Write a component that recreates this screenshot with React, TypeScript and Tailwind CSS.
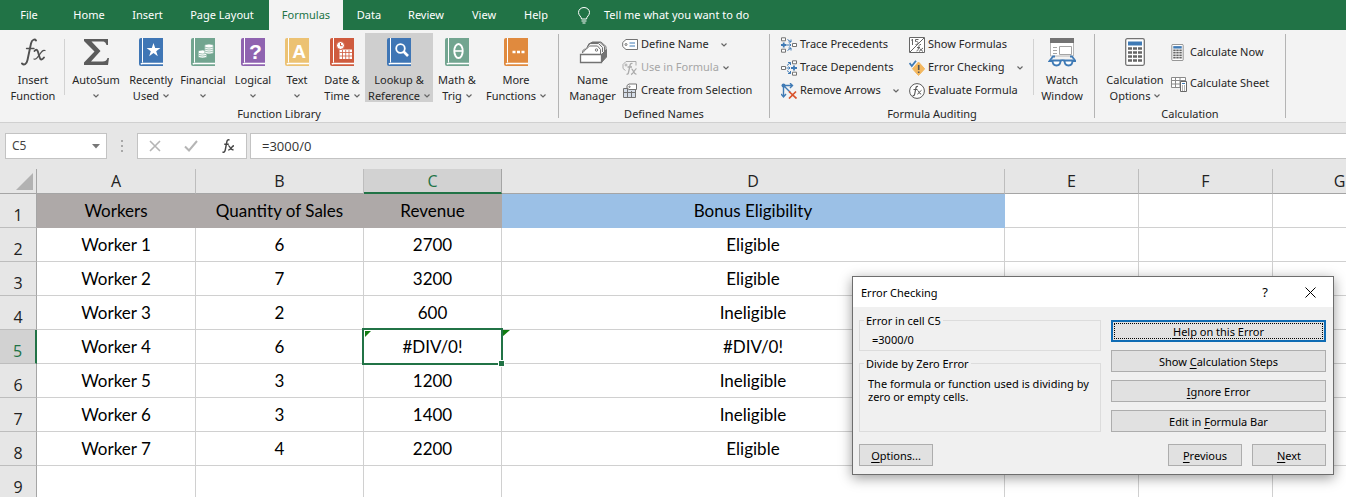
import { useState } from "react";

const TABS = [
  { label: "File", width: "w-[58px]" },
  { label: "Home", width: "w-[62px]" },
  { label: "Insert", width: "w-[55px]" },
  { label: "Page Layout", width: "w-[94px]" },
  { label: "Formulas", width: "w-[74px]" },
  { label: "Data", width: "w-[52px]" },
  { label: "Review", width: "w-[62px]" },
  { label: "View", width: "w-[54px]" },
  { label: "Help", width: "w-[50px]" },
];

const COLUMNS = ["A", "B", "C", "D", "E", "F", "G"];

const ROWS = [
  ["Workers", "Quantity of Sales", "Revenue", "Bonus Eligibility"],
  ["Worker 1", "6", "2700", "Eligible"],
  ["Worker 2", "7", "3200", "Eligible"],
  ["Worker 3", "2", "600", "Ineligible"],
  ["Worker 4", "6", "#DIV/0!", "#DIV/0!"],
  ["Worker 5", "3", "1200", "Ineligible"],
  ["Worker 6", "3", "1400", "Ineligible"],
  ["Worker 7", "4", "2200", "Eligible"],
  ["", "", "", ""],
];

function Chevron({ className = "" }: { className?: string }) {
  return (
    <svg className={`inline-block ${className}`} width="6" height="4" viewBox="0 0 6 4" fill="none" stroke="#666" strokeWidth="1.2">
      <path d="M.5.5 3 3 5.5.5" />
    </svg>
  );
}

function Book({ color, children }: { color: string; children: React.ReactNode }) {
  return (
    <svg width="24" height="28" viewBox="0 0 24 28" fill="none">
      <path d="M2 0h22v28H2a2 2 0 0 1-2-2V2a2 2 0 0 1 2-2z" fill={color} />
      <path d="M3.5 0v24.5" stroke="#fff" />
      <path d="M24 25.5H3.5a2 2 0 0 0-1.5.8" stroke="#fff" strokeWidth="1.6" />
      {children}
    </svg>
  );
}

function FxIcon() {
  return (
    <svg width="26" height="28" viewBox="0 0 26 28" fill="none" stroke="#505050" strokeLinecap="round">
      <path d="M16 2.5c-1-1.700-4-1.300-5 3L7.500 22c-.9 4.500-3.500 5.500-5.500 3.500" strokeWidth="1.9" />
      <path d="M6.500 10.500h7.500" strokeWidth="1.3" />
      <path d="M14.500 13c2-2.500 3.200-.8 4 2.500l1 3.500c.8 3.200 2.500 3.200 4.500.5" strokeWidth="1.9" />
      <path d="M25 12.500c-2-1-3.300.8-5.500 4.200-2 3.200-3.500 5.500-5.500 4.300" strokeWidth="1.2" />
    </svg>
  );
}

function SigmaIcon() {
  return (
    <svg width="26" height="28" viewBox="0 0 26 28" fill="#5c5c5c">
      <path d="M1 1h24v6h-1.500C22.500 4 21.500 3.500 18.500 3.500H8.500L17.500 13 8 23.500h11.500c3 0 4-.8 5-3.500H26l-1 7H1v-2.500L11.500 13.500 1 3z" />
    </svg>
  );
}

function NameManagerIcon() {
  return (
    <svg width="28" height="28" viewBox="0 0 28 28" fill="none" stroke="#737373">
      <path d="M3.500 15c0-3 1-4 4-4l3-3h8l3 3.500V16" fill="#fff" />
      <path d="M7.500 10.500 10 5.500h9.500l4 4V14M9 8l3-3.500h9l4.500 4V13M11 5.500 13.500 4H22l5 4.500v4" />
      <path d="m22.500 16.500 5-5v7.500l-5 5.500z" fill="#737373" />
      <path d="M1.500 16.500h21v8h-21z" fill="#fff" strokeWidth="1.3" />
      <circle cx="17.500" cy="12" r="1.2" />
      <path d="M4 14.500 7 11" />
    </svg>
  );
}

function WatchWindowIcon() {
  return (
    <svg width="28" height="30" viewBox="0 0 28 30" fill="none">
      <path d="M2.500 2.500h23V18h-23z" fill="#fff" stroke="#b5b5b5" />
      <path d="M2 0h24v5H2z" fill="#737373" />
      <path d="M11.500 8.500h12v8h-12zM5 9.500h4M5 12.500h4M5 15.500h4" stroke="#a5a5a5" />
      <g stroke="#3f7ab5" strokeWidth="1.8">
        <path d="M4.500 22.500h8c0 3-1.200 5-4 5s-4-2-4-5zM16.500 22.500h8c0 3-1.200 5-4 5s-4-2-4-5z" fill="#fff" />
        <path d="M12.500 23c1-1 3-1 4 0M4 23H1.500L5 18.500h2M25 23h2.500L24 18.500h-2" />
      </g>
    </svg>
  );
}

function CalculatorIcon({ width, height }: { width: number; height: number }) {
  return (
    <svg width={width} height={height} viewBox="0 0 20 28" fill="none">
      <rect x=".7" y=".7" width="18.6" height="26.6" rx="1.5" fill="#fff" stroke="#737373" strokeWidth="1.3" />
      <path d="M3 3.500h14v4H3z" fill="#3f7ab5" />
      <path d="M3 10.500h14M3 14.500h14M3 18.500h14M3 22.500h14" stroke="#666" strokeWidth="2.6" strokeDasharray="4 1" />
    </svg>
  );
}

function TagIcon() {
  return (
    <svg width="16" height="14" viewBox="0 0 16 14" fill="none" stroke="#737373">
      <path d="M4 1.500h11.500v10H4L.7 8.500v-4z" fill="#fff" strokeLinejoin="round" />
      <circle cx="4" cy="6.500" r="1" />
      <path d="M7.500 5h5.500M7.500 8h5.500" stroke="#3f7ab5" />
    </svg>
  );
}

function UseFormulaIcon() {
  return (
    <svg width="16" height="16" viewBox="0 0 16 16" fill="none" stroke="#ababab">
      <path d="M3.500 10.500 1 8.500V4.500l3-3h10v4" />
      <circle cx="4" cy="5" r="1" />
      <path d="M10.500 3.500c-1.500-.5-2.200.5-2.500 2l-1.500 7c-.3 1.500-1 2-2 1.500M5.500 7h4.500M9.500 9c2 0 2 6 5 5M14.500 8.500c-2 1-3 5.500-5.500 6" strokeWidth="1.3" />
    </svg>
  );
}

function CreateSelectionIcon() {
  return (
    <svg width="16" height="16" viewBox="0 0 16 16" fill="none" stroke="#737373">
      <path d="M1.500 5.500h12v9h-12z" fill="#d5dde8" />
      <path d="M1.500 9.500h12M5.500 5.500v9M9.500 8v6.500" />
      <path d="M7 1h7.500v5.500H7L5 5V2.500z" fill="#fff" />
      <circle cx="7.500" cy="3.800" r=".7" />
    </svg>
  );
}

function PrecedentsIcon() {
  return (
    <svg width="16" height="16" viewBox="0 0 16 16" fill="none" stroke="#737373">
      <path d="M.5.8h4v3h-4zM.5 12.200h4v3h-4zM11.500 6.500h4v3h-4z" fill="#fff" />
      <path d="M0 8h5.500M2.700 5.500v5" stroke="#3f7ab5" strokeWidth="1.8" />
      <path d="M6.500 2.500 10 5M10 2.500V5H7.500M6.500 13.500 10 11M10 13.500V11H7.500M6 8h4M8.500 6.500 10 8 8.500 9.500" stroke="#3f7ab5" />
    </svg>
  );
}

function DependentsIcon() {
  return (
    <svg width="16" height="16" viewBox="0 0 16 16" fill="none" stroke="#737373">
      <path d="M.5 6.500h4v3h-4zM11.500.8h4v3h-4zM11.500 12.200h4v3h-4z" fill="#fff" />
      <path d="M10 8h6M13 5.500v5" stroke="#3f7ab5" strokeWidth="1.8" />
      <path d="m6 5.500 3.500-3M7 2.500h2.500V5M6 10.500l3.500 3M7 13.500h2.500V11M5.500 8H9M7.500 6.500 9 8 7.500 9.500" stroke="#3f7ab5" />
    </svg>
  );
}

function RemoveArrowsIcon() {
  return (
    <svg width="16" height="16" viewBox="0 0 16 16" fill="none">
      <path d="M2.500 2v11M0 11l2.500 3L5 11M2 2.500h9M9 .2l2.500 2.300L9 5M2.500 2.500l7 7" stroke="#3f7ab5" strokeWidth="1.4" />
      <circle cx="2.500" cy="2.500" r="2" fill="#3f7ab5" />
      <path d="m8 8.500 7.500 7M15 8.500 8 15.500" stroke="#d9532c" strokeWidth="1.7" />
    </svg>
  );
}

function ShowFormulasIcon() {
  return (
    <svg width="16" height="16" viewBox="0 0 16 16" fill="none" stroke="#666">
      <path d="M.5.5h15v15H.5z" fill="#fff" />
      <path d="M15 1 1 15" />
      <path d="M3.500 2v6M2.500 3.500 3.500 2M9.500 2.500h-3v2c3.500-.5 3.500 3 0 3" />
      <path d="M12 7.500c-2-.5-2 1.500-2.500 3.500s-.5 3-2 3M8 10.500h3M10.500 11.500l3.500 3M14 11l-4 3.500" />
    </svg>
  );
}

function ErrorCheckingIcon() {
  return (
    <svg width="16" height="16" viewBox="0 0 16 16" fill="none">
      <path d="m9.500 2 6.200 6.800-6.200 6.700L3.500 8.800z" fill="#f3b75e" stroke="#f3b75e" strokeLinejoin="round" />
      <path d="M9.700 5v5M9.700 11.500v1.600" stroke="#555" strokeWidth="1.6" />
      <path d="m.5 3 2.300 3L7 .8" stroke="#3f7ab5" strokeWidth="1.8" />
    </svg>
  );
}

function EvaluateIcon() {
  return (
    <svg width="16" height="16" viewBox="0 0 16 16" fill="none" stroke="#595959">
      <circle cx="8" cy="8" r="7.4" fill="#fff" />
      <path d="M9 3.500c-1.500-.5-1.900.5-2.200 2L5.700 11c-.3 1.500-1 1.800-2 1.300M4.500 6.500h4" strokeWidth="1.2" />
      <path d="M8.500 7.500c1.500-.2 1.500 4 3.700 3.500M12.500 7.300c-1.700.5-2.200 3.400-4.200 3.900" />
    </svg>
  );
}

function CalcSheetIcon() {
  return (
    <svg width="16" height="16" viewBox="0 0 16 16" fill="none" stroke="#8a8a8a">
      <path d="M.5 1.500h14v10H.5zM.5 4.500h14M.5 8h14M4.500 1.500v10M9 1.500v10" fill="#fff" />
      <path d="M9.500 5.500h6v10h-6z" fill="#fff" stroke="#666" />
      <path d="M11 7.500h3" stroke="#3f7ab5" />
      <path d="M11 10h3M11 12h3M11 14h3" strokeDasharray="1 1" stroke="#666" />
    </svg>
  );
}

interface BigButtonProps {
  icon: React.ReactNode;
  lines: [string, string?];
  width: string;
  menu?: boolean;
  active?: boolean;
}

function BigButton({ icon, lines, width, menu, active }: BigButtonProps) {
  return (
    <button className={`flex h-[69px] shrink-0 flex-col items-center whitespace-nowrap pt-[5px] ${width} ${active ? "bg-[#cfcfcf]" : ""}`}>
      <span className="flex h-7 items-start justify-center">{icon}</span>
      <span className="mt-1.5 block leading-4">
        {lines[0]}
        <br />
        {lines[1]}
        {menu && <Chevron className={lines[1] ? "mb-0.5 ml-1" : "mb-0.5"} />}
      </span>
    </button>
  );
}

interface SmallButtonProps {
  icon: React.ReactNode;
  label: string;
  menu?: boolean;
  disabled?: boolean;
  tall?: boolean;
}

function SmallButton({ icon, label, menu, disabled, tall }: SmallButtonProps) {
  return (
    <button disabled={disabled} className={`flex items-center whitespace-nowrap ${tall ? "h-[31px]" : "h-[23px]"} ${disabled ? "text-[#a6a6a6]" : ""}`}>
      <span className="flex w-[19px] shrink-0 items-center">{icon}</span>
      {label}
      {menu && <Chevron className={disabled ? "ml-1" : "ml-3"} />}
    </button>
  );
}

function Group({ label, width, children }: { label: string; width: string; children: React.ReactNode }) {
  return (
    <section className={`flex shrink-0 flex-col pt-[3px] ${width}`}>
      <div className="flex h-[70px]">{children}</div>
      <h2 className="mt-[3px] text-center leading-4">{label}</h2>
    </section>
  );
}

function Divider({ short }: { short?: boolean }) {
  return <div className={`w-px shrink-0 ${short ? "mt-1.5 h-14 bg-[#d2d2d2]" : "mt-1 h-[84px] bg-[#b4b4b4]"}`} />;
}

function Ribbon() {
  return (
    <div className="flex h-[92px] shrink-0 overflow-hidden bg-[#f3f3f3]">
      <Group label="Function Library" width="w-[558px]">
        <BigButton icon={<FxIcon />} lines={["Insert", "Function"]} width="ml-0.5 w-[62px]" />
        <Divider short />
        <BigButton icon={<SigmaIcon />} lines={["AutoSum"]} width="w-[62px]" menu />
        <BigButton
          icon={
            <Book color="#3f76b5">
              <path d="m14.500 5 1.700 5h5.200l-4.200 3.200 1.600 5-4.300-3.100-4.300 3.100 1.600-5L7.600 10h5.200z" fill="#fff" />
            </Book>
          }
          lines={["Recently", "Used"]}
          width="w-12"
          menu
        />
        <BigButton
          icon={
            <Book color="#72a590">
              <g fill="#fff" stroke="#72a590" strokeWidth=".7">
                <ellipse cx="11.500" cy="18" rx="4.500" ry="2" />
                <ellipse cx="11.500" cy="16" rx="4.500" ry="2" />
                <ellipse cx="11.500" cy="14" rx="4.500" ry="2" />
                <ellipse cx="18" cy="14" rx="4.500" ry="2" />
                <ellipse cx="18" cy="12" rx="4.500" ry="2" />
                <ellipse cx="18" cy="10" rx="4.500" ry="2" />
                <ellipse cx="18" cy="8" rx="4.500" ry="2" />
              </g>
            </Book>
          }
          lines={["Financial"]}
          width="w-14"
          menu
        />
        <BigButton
          icon={
            <Book color="#8f63b0">
              <text x="14.500" y="20.500" textAnchor="middle" fill="#fff" className="font-['Liberation_Sans',sans-serif] text-[21px] font-bold">
                ?
              </text>
            </Book>
          }
          lines={["Logical"]}
          width="w-11"
          menu
        />
        <BigButton
          icon={
            <Book color="#ecc273">
              <text x="14" y="20" textAnchor="middle" fill="#fff" className="font-['Liberation_Sans',sans-serif] text-[19px] font-bold">
                A
              </text>
            </Book>
          }
          lines={["Text"]}
          width="w-11"
          menu
        />
        <BigButton
          icon={
            <Book color="#cf5b3e">
              <path d="M9.500 11.500h12.500V21H9.500z" fill="#fff" />
              <path d="M9.500 14.500H22M9.500 18H22M12.500 12v9M15.700 12v9M19 12v9" stroke="#cf5b3e" strokeWidth=".8" />
              <circle cx="10.500" cy="7.500" r="4" fill="#fff" stroke="#cf5b3e" />
              <path d="M10.500 5v2.700h2" stroke="#cf5b3e" />
            </Book>
          }
          lines={["Date &", "Time"]}
          width="w-[46px]"
          menu
        />
        <BigButton
          icon={
            <Book color="#3f76b5">
              <circle cx="13.500" cy="10.500" r="4.3" stroke="#fff" strokeWidth="1.8" />
              <path d="m16.500 13.500 4.500 4.500" stroke="#fff" strokeWidth="2.6" />
            </Book>
          }
          lines={["Lookup &", "Reference"]}
          width="w-[68px]"
          menu
          active
        />
        <BigButton
          icon={
            <Book color="#72a590">
              <ellipse cx="13.500" cy="13" rx="4.2" ry="7" stroke="#fff" strokeWidth="1.9" />
              <path d="M9.500 13h8" stroke="#fff" strokeWidth="1.6" />
            </Book>
          }
          lines={["Math &", "Trig"]}
          width="w-12"
          menu
        />
        <BigButton
          icon={
            <Book color="#e08a3e">
              <path d="M8.500 14h3M13 14h3M17.500 14h3" stroke="#fff" strokeWidth="2.6" />
            </Book>
          }
          lines={["More", "Functions"]}
          width="w-[70px]"
          menu
        />
      </Group>
      <Divider />
      <Group label="Defined Names" width="w-[210px]">
        <BigButton icon={<NameManagerIcon />} lines={["Name", "Manager"]} width="ml-1 w-[59px]" />
        <div>
          <SmallButton icon={<TagIcon />} label="Define Name" menu />
          <SmallButton icon={<UseFormulaIcon />} label="Use in Formula" menu disabled />
          <SmallButton icon={<CreateSelectionIcon />} label="Create from Selection" />
        </div>
      </Group>
      <Divider />
      <Group label="Formula Auditing" width="w-[324px]">
        <div className="w-[139px] shrink-0 pl-[11px]">
          <SmallButton icon={<PrecedentsIcon />} label="Trace Precedents" />
          <SmallButton icon={<DependentsIcon />} label="Trace Dependents" />
          <SmallButton icon={<RemoveArrowsIcon />} label="Remove Arrows" menu />
        </div>
        <div className="w-[124px] shrink-0">
          <SmallButton icon={<ShowFormulasIcon />} label="Show Formulas" />
          <SmallButton icon={<ErrorCheckingIcon />} label="Error Checking" menu />
          <SmallButton icon={<EvaluateIcon />} label="Evaluate Formula" />
        </div>
        <Divider short />
        <BigButton icon={<WatchWindowIcon />} lines={["Watch", "Window"]} width="w-[56px]" />
      </Group>
      <Divider />
      <Group label="Calculation" width="w-[190px]">
        <BigButton icon={<CalculatorIcon width={20} height={28} />} lines={["Calculation", "Options"]} width="ml-1 w-[72px]" menu />
        <div className="pt-1">
          <SmallButton icon={<CalculatorIcon width={13} height={17} />} label="Calculate Now" tall />
          <SmallButton icon={<CalcSheetIcon />} label="Calculate Sheet" tall />
        </div>
      </Group>
      <Divider />
    </div>
  );
}

function FormulaBar() {
  return (
    <div className="flex h-[47px] shrink-0 items-start border-t border-[#d0d0d0] pl-[5px] pt-2.5">
      <div className="flex h-[26px] w-[102px] items-center border border-[#c3c3c3] bg-white">
        <input aria-label="Name Box" defaultValue="C5" className="w-full min-w-0 pl-1.5 text-xs text-[#444] outline-none" />
        <button aria-label="Open name list" className="px-1.5">
          <svg width="8" height="5" viewBox="0 0 8 5" fill="#777">
            <path d="M0 0h8L4 4.500z" />
          </svg>
        </button>
      </div>
      <svg className="mx-[13px] mt-1.5" width="4" height="14" viewBox="0 0 4 14" fill="#a8a8a8">
        <path d="M1 1h2v2H1zM1 6h2v2H1zM1 11h2v2H1z" />
      </svg>
      <div className="flex h-[26px] w-[110px] items-center justify-around border border-[#c3c3c3] bg-white">
        <button aria-label="Cancel">
          <svg width="12" height="12" viewBox="0 0 12 12" fill="none" stroke="#b5b5b5" strokeWidth="1.6">
            <path d="m1 1 10 10M11 1 1 11" />
          </svg>
        </button>
        <button aria-label="Enter">
          <svg width="14" height="12" viewBox="0 0 14 12" fill="none" stroke="#b5b5b5" strokeWidth="2">
            <path d="m1 6.500 4 4L13 1" />
          </svg>
        </button>
        <button aria-label="Insert Function">
          <svg width="14" height="14" viewBox="0 0 26 28" fill="none" stroke="#444" strokeWidth="2.8">
            <path d="M16 2.500c-2-1.700-4.500-1-5.300 3L7.500 22c-.9 4.500-3.500 5.500-5.500 3.500M5.500 10.500h9" />
            <path d="M13.500 14c4-2 3.500 10 10.500 7M25 13.500c-5 0-6 9-11.500 8.500" />
          </svg>
        </button>
      </div>
      <input
        aria-label="Formula Bar"
        defaultValue="=3000/0"
        className="ml-[3px] h-[26px] min-w-0 flex-1 border border-r-0 border-[#c3c3c3] bg-white pl-[11px] font-['Open_Sans',sans-serif] text-[13px] leading-4 text-[#333] outline-none"
      />
    </div>
  );
}

function cellClass(row: number, col: number) {
  if (row > 0) return "border-[#d0d0d0] bg-white";
  if (col < 3) return "border-[#aea9a8] bg-[#aea9a8]";
  if (col === 3) return "border-[#9bc0e6] bg-[#9bc0e6]";
  return "border-[#d0d0d0] bg-white";
}

function Sheet() {
  return (
    <div className="min-h-0 flex-1 overflow-hidden">
      <table className="w-[1407px] table-fixed border-separate border-spacing-0 text-center">
        <colgroup>
          <col className="w-[37px]" />
          <col className="w-[159px]" />
          <col className="w-[168px]" />
          <col className="w-[138px]" />
          <col className="w-[503px]" />
          <col className="w-[134px]" />
          <col className="w-[134px]" />
          <col className="w-[134px]" />
        </colgroup>
        <thead>
          <tr className="h-[25px] font-['Open_Sans',sans-serif] text-base leading-5 text-[#222]">
            <th className="border-b border-r border-[#a5a5a5] p-0">
              <svg className="ml-auto mr-[3px]" width="17" height="17" viewBox="0 0 17 17" fill="#b2b2b2">
                <path d="M17 0v17H0z" />
              </svg>
            </th>
            {COLUMNS.map((col) => (
              <th
                key={col}
                className={`p-0 font-normal ${col === "C" ? "border-b-2 border-r border-b-[#217346] border-r-[#a5a5a5] bg-[#d2d2d2] text-[#217346]" : "border-b border-r border-b-[#a5a5a5] border-r-[#bdbdbd]"}`}
              >
                {col}
              </th>
            ))}
          </tr>
        </thead>
        <tbody>
          {ROWS.map((row, r) => (
            <tr key={r} className="h-[34px] font-[Lato,sans-serif] text-[17px] leading-6 text-black">
              <th
                className={`border-b border-b-[#bdbdbd] p-0 pt-2 font-['Open_Sans',sans-serif] text-base font-normal leading-5 ${r === 4 ? "border-r-2 border-r-[#217346] bg-[#d2d2d2] text-[#217346]" : "border-r border-r-[#a5a5a5] text-[#222]"}`}
              >
                {r + 1}
              </th>
              {COLUMNS.map((col, c) => (
                <td key={col} className={`relative border-b border-r p-0 ${cellClass(r, c)} ${r === 4 && c === 2 ? "z-10" : ""}`}>
                  {row[c]}
                  {r === 4 && c === 2 && (
                    <span className="pointer-events-none absolute -inset-0.5 border-2 border-[#217346]">
                      <span className="absolute -bottom-1 -right-1 size-[7px] border border-white bg-[#217346]" />
                    </span>
                  )}
                  {r === 4 && (c === 2 || c === 3) && (
                    <svg className="absolute left-0 top-0" width="8" height="7" viewBox="0 0 8 7" fill="#107c10">
                      <path d={c === 2 ? "M1 1h6L1 7z" : "M0 0h8L0 7z"} />
                    </svg>
                  )}
                </td>
              ))}
            </tr>
          ))}
        </tbody>
      </table>
    </div>
  );
}

interface DialogButtonProps {
  before?: string;
  hotkey: string;
  after: string;
  focused?: boolean;
  small?: boolean;
}

function DialogButton({ before = "", hotkey, after, focused, small }: DialogButtonProps) {
  return (
    <button
      className={`h-[22px] bg-[#e1e1e1] ${small ? "w-[74px]" : "w-full"} ${focused ? "border-2 border-[#0f6cb4] p-px" : "border border-[#adadad]"}`}
    >
      <span className={`flex h-full items-center justify-center whitespace-pre ${focused ? "border border-dotted border-black" : ""}`}>
        {before}
        <u className="underline-offset-2">{hotkey}</u>
        {after}
      </span>
    </button>
  );
}

function ErrorDialog({ onClose }: { onClose: () => void }) {
  return (
    <div
      role="dialog"
      aria-label="Error Checking"
      className="absolute bottom-[22px] right-3 z-20 w-[482px] border border-[#6e6e6e] bg-[#f0f0f0] leading-[13px] text-black shadow-[0_3px_12px_rgba(0,0,0,0.4)]"
    >
      <div className="flex h-[30px] items-center bg-white pl-2">
        <h2 className="flex-1">Error Checking</h2>
        <button aria-label="Help" className="w-11 text-[13px]">?</button>
        <button aria-label="Close" onClick={onClose} className="flex w-[46px] justify-center">
          <svg width="11" height="11" viewBox="0 0 11 11" fill="none" stroke="#000">
            <path d="m.5.5 10 10M10.500.5l-10 10" />
          </svg>
        </button>
      </div>
      <div className="flex gap-2.5 pl-1.5 pr-[7px] pt-[7px]">
        <div className="w-[242px]">
          <fieldset className="h-[37px] border border-[#dcdcdc] pl-3">
            <legend className="-ml-2 px-0.5">Error in cell C5</legend>
            <p className="pt-1.5">=3000/0</p>
          </fieldset>
          <fieldset className="mt-1.5 h-[75px] border border-[#dcdcdc] pl-2">
            <legend className="-ml-1 px-0.5">Divide by Zero Error</legend>
            <p className="pt-[7px]">
              The formula or function used is dividing by
              <br />
              zero or empty cells.
            </p>
          </fieldset>
        </div>
        <div className="flex flex-1 flex-col gap-2 pt-1.5">
          <DialogButton hotkey="H" after="elp on this Error" focused />
          <DialogButton before="Show " hotkey="C" after="alculation Steps" />
          <DialogButton hotkey="I" after="gnore Error" />
          <DialogButton before="Edit in " hotkey="F" after="ormula Bar" />
        </div>
      </div>
      <div className="flex gap-2.5 pb-2 pl-1.5 pr-[7px] pt-3">
        <DialogButton hotkey="O" after="ptions..." small />
        <span className="flex-1" />
        <DialogButton hotkey="P" after="revious" small />
        <DialogButton hotkey="N" after="ext" small />
      </div>
    </div>
  );
}

export default function App() {
  const [tab, setTab] = useState("Formulas");
  const [dialogOpen, setDialogOpen] = useState(true);

  return (
    <div className="relative flex h-screen flex-col overflow-hidden bg-[#e6e6e6] font-['Noto_Sans',sans-serif] text-[11px] text-[#262626]">
      <nav className="flex h-[30px] shrink-0 items-stretch bg-[#217346] text-white">
        {TABS.map((t) => (
          <button
            key={t.label}
            onClick={() => setTab(t.label)}
            className={`shrink-0 whitespace-nowrap ${t.width} ${tab === t.label ? "bg-[#f3f3f3] text-[#217346]" : ""}`}
          >
            {t.label}
          </button>
        ))}
        <button className="ml-[17px] flex items-center gap-3.5 whitespace-nowrap">
          <svg width="12" height="17" viewBox="0 0 12 17" fill="none" stroke="#fff">
            <path d="M3.500 12c0-2.500-3-3.500-3-6.500a5.500 5 0 0 1 11 0c0 3-3 4-3 6.500zM3.500 14h5M4.500 16h3" />
          </svg>
          Tell me what you want to do
        </button>
      </nav>
      <Ribbon />
      <FormulaBar />
      <Sheet />
      {dialogOpen && <ErrorDialog onClose={() => setDialogOpen(false)} />}
    </div>
  );
}
